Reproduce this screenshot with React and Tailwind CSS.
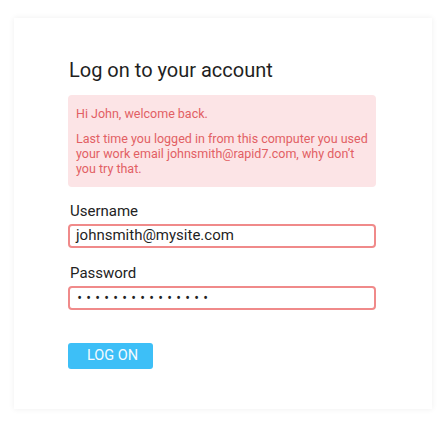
import React from "react";

export default function App() {
  const dots = Array.from({ length: 15 });
  return (
    <div
      className="min-h-[422px] w-[445px] bg-white pt-[18px] pl-[14px]"
      style={{ fontFamily: "Roboto, 'Noto Sans', sans-serif" }}
    >
      <div className="w-[418px] h-[391px] bg-white shadow-[0_0_6px_rgba(0,0,0,0.07)] pt-[40px] pl-[54px] pr-[56px]">
        <h1 className="text-[20px] leading-[24px] text-[#1f1f1f] pl-[1px]">
          Log on to your account
        </h1>
        <div className="mt-[13px] rounded-[4px] bg-[#fce4e6] px-[8px] pt-[10.5px] pb-[11px] text-[12.5px] leading-[15px] text-[#e25f64]">
          <p className="whitespace-nowrap">Hi John, welcome back.</p>
          <p className="mt-[10px] whitespace-nowrap">
            Last time you logged in from this computer you used
            <br />
            your work email johnsmith@rapid7.com, why don’t
            <br />
            you try that.
          </p>
        </div>
        <label className="block mt-[15.5px] mb-[3.5px] text-[15px] leading-[18px] text-[#222] pl-[2px]">
          Username
        </label>
        <div className="h-[24px] rounded-[4px] border-2 border-[#f08a8a] flex items-center pl-[6px] text-[15px] text-[#1f1f1f]">
          johnsmith@mysite.com
        </div>
        <label className="block mt-[16.5px] mb-[4px] text-[15px] leading-[18px] text-[#222] pl-[2px]">
          Password
        </label>
        <div className="h-[24px] rounded-[4px] border-2 border-[#f08a8a] flex items-center pl-[5px] text-[14px] text-[#222]">
          {dots.map((_, i) => (
            <span key={i} className="w-[9px] text-center leading-none">
              •
            </span>
          ))}
        </div>
        <button className="mt-[33px] block w-[85px] h-[26px] rounded-[3px] bg-[#3dbff7] text-left pl-[19px] text-[14.5px] leading-[26px] text-[#f4fbff]">
          LOG ON
        </button>
      </div>
    </div>
  );
}
